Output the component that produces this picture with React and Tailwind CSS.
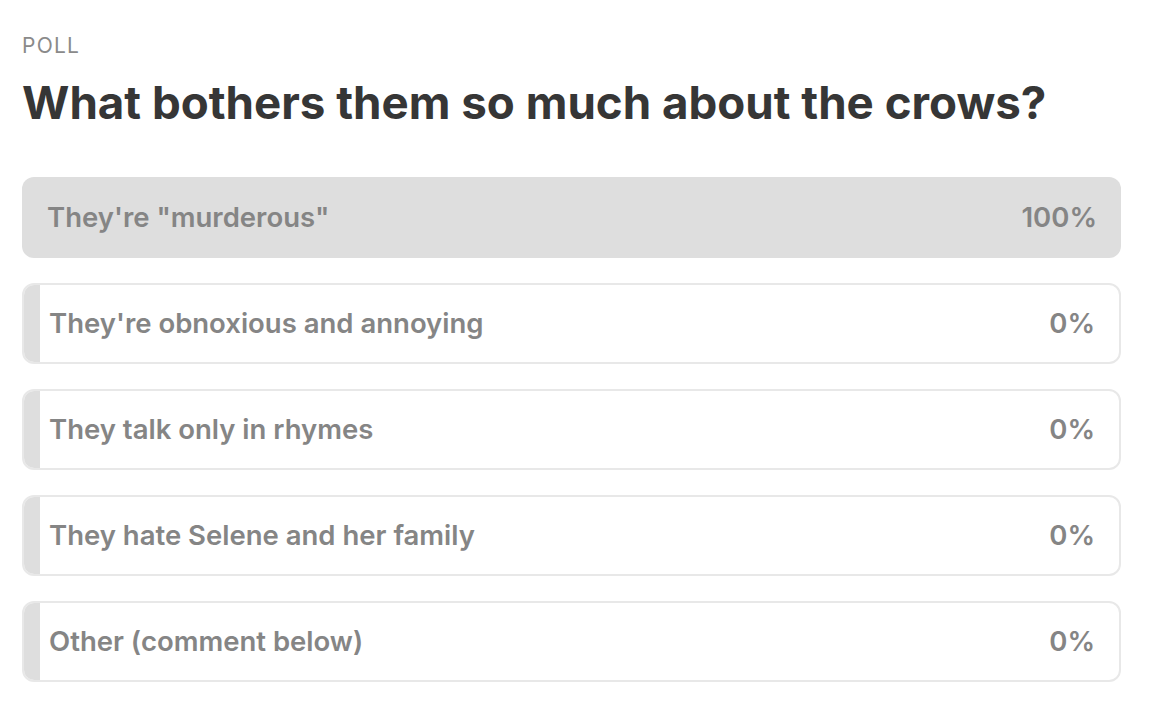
import React from 'react';

const options = [
  { label: `They're "murderous"`, pct: 100 },
  { label: "They're obnoxious and annoying", pct: 0 },
  { label: 'They talk only in rhymes', pct: 0 },
  { label: 'They hate Selene and her family', pct: 0 },
  { label: 'Other (comment below)', pct: 0 },
];

const PollOption = ({ label, pct }) => {
  const full = pct === 100;
  return (
    <div
      className={`relative h-[81px] rounded-[12px] overflow-hidden ${
        full ? 'bg-[#dedede]' : 'bg-white border-2 border-[#e8e8e8]'
      }`}
    >
      {!full && (
        <div
          className="absolute left-[-2px] top-[-2px] bottom-[-2px] bg-[#dedede] rounded-l-[12px]"
          style={{ width: `max(${pct}%, 18px)` }}
        />
      )}
      <div className="relative flex h-full items-center justify-between pl-[25px] pr-[24px] text-[27.5px] font-semibold text-[#858585]">
        <span>{label}</span>
        <span>{pct}%</span>
      </div>
    </div>
  );
};

export default function App() {
  return (
    <div className="min-h-screen bg-white px-[22px] pt-[35px] font-['Inter',sans-serif]">
      <div className="w-[1099px]">
        <div className="text-[21px] tracking-[0.06em] text-[#8a8a8a] leading-none uppercase">Poll</div>
        <h1 className="mt-[24px] text-[45.7px] font-bold leading-none text-[#363636]">
          What bothers them so much about the crows?
        </h1>
        <div className="mt-[51px] flex flex-col gap-[25px]">
          {options.map((o, i) => (
            <PollOption key={i} label={o.label} pct={o.pct} />
          ))}
        </div>
      </div>
    </div>
  );
}
